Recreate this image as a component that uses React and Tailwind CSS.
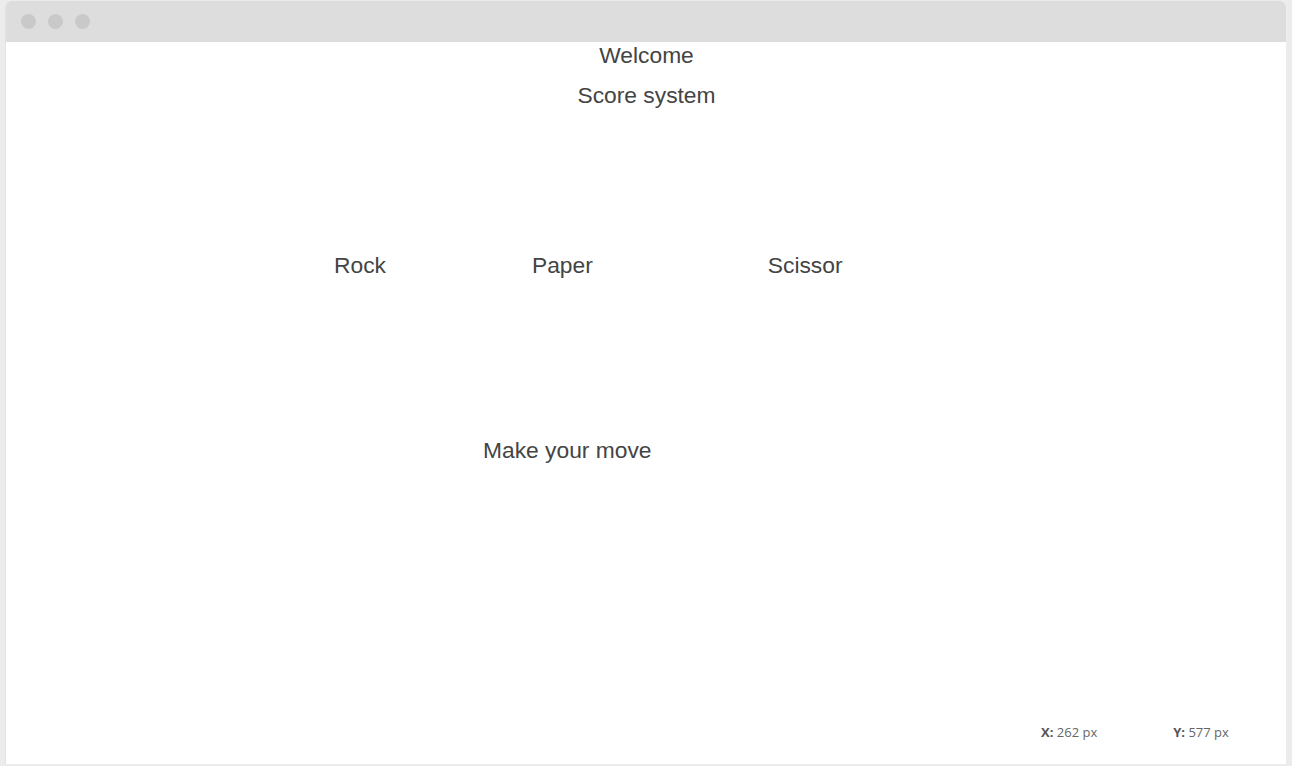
export default function App() {
  return (
    <div className="w-[1292px] h-[766px] bg-[#ececec] pt-px pl-[5px] pr-[6px] pb-[2px] flex flex-col font-['Liberation_Sans',Arial,sans-serif]">
      {/* window */}
      <div className="flex-1 flex flex-col bg-white rounded-t-[6px] border-l border-[#e2e2e2] overflow-hidden">
        {/* title bar */}
        <div className="h-[41px] bg-[#dddddd] flex items-center gap-[12px] pl-[15px] shrink-0">
          <span className="w-[15px] h-[15px] rounded-full bg-[#c9c9c9]" />
          <span className="w-[15px] h-[15px] rounded-full bg-[#c9c9c9]" />
          <span className="w-[15px] h-[15px] rounded-full bg-[#c9c9c9]" />
        </div>

        {/* content */}
        <div className="flex-1 flex flex-col text-[#444444] text-[22.8px] leading-[26px]">
          <div className="text-center pl-[1px]">Welcome</div>
          <div className="text-center mt-[14px] pl-[1px]">Score system</div>

          <div className="flex mt-[144px] pl-[328px]">
            <span>Rock</span>
            <span className="ml-[146px]">Paper</span>
            <span className="ml-[175px]">Scissor</span>
          </div>

          <div className="mt-[159px] pl-[477px]">Make your move</div>

          <div className="mt-auto mb-[23px] flex text-[13px] leading-[18px] text-[#666666] font-['Open_Sans',sans-serif] pl-[1035px]">
            <span>
              <b className="font-bold text-[#555555]">X:</b> 262 px
            </span>
            <span className="ml-[76px]">
              <b className="font-bold text-[#555555]">Y:</b> 577 px
            </span>
          </div>
        </div>
      </div>
    </div>
  );
}
